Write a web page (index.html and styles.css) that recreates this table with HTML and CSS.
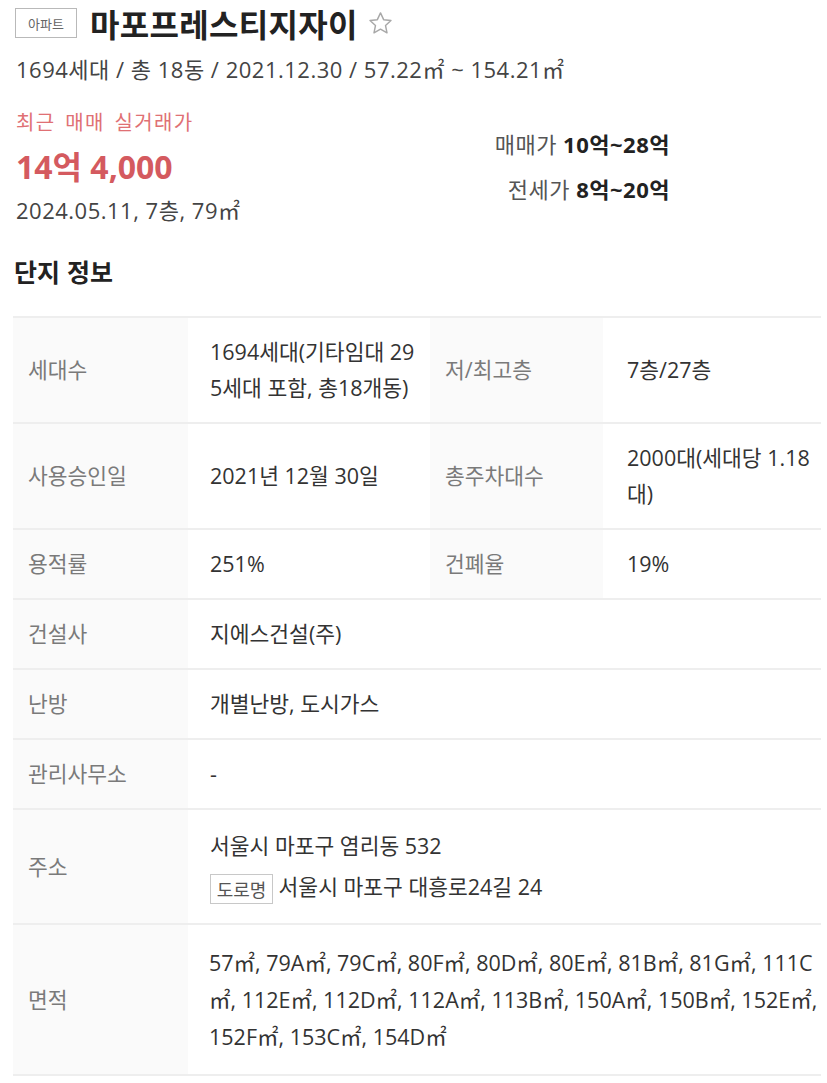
FILE: index.html
```html
<!DOCTYPE html>
<html lang="ko">
<head>
<meta charset="utf-8">
<title>마포프레스티지자이</title>
<link rel="stylesheet" href="styles.css">
</head>
<body>
<div class="page">
  <div class="title-row">
    <span class="type-badge">아파트</span>
    <h1 class="title">마포프레스티지자이</h1>
    <svg class="star" width="27" height="27" viewBox="0 0 24 24" aria-hidden="true">
      <path d="M12 2.6l2.8 6 6.5.75-4.82 4.45 1.3 6.45L12 17.05 6.22 20.25l1.3-6.45L2.7 9.35l6.5-.75z" fill="none" stroke="#a8a8a8" stroke-width="1.3" stroke-linejoin="round"/>
    </svg>
  </div>
  <p class="sub">1694세대 / 총 18동 / 2021.12.30 / 57.22㎡ ~ 154.21㎡</p>

  <div class="summary">
    <div class="recent">
      <div class="recent-label">최근 매매 실거래가</div>
      <div class="recent-price">14억 4,000</div>
      <div class="recent-date">2024.05.11, 7층, 79㎡</div>
    </div>
    <div class="ranges">
      <div class="range"><span class="range-label">매매가</span> <b>10억~28억</b></div>
      <div class="range"><span class="range-label">전세가</span> <b>8억~20억</b></div>
    </div>
  </div>

  <h2 class="section-title">단지 정보</h2>

  <table class="info">
    <colgroup>
      <col class="c-label"><col class="c-val1"><col class="c-label2"><col>
    </colgroup>
    <tr>
      <th>세대수</th><td>1694세대(기타임대 295세대 포함, 총18개동)</td>
      <th class="th2">저/최고층</th><td class="td2">7층/27층</td>
    </tr>
    <tr>
      <th>사용승인일</th><td>2021년 12월 30일</td>
      <th class="th2">총주차대수</th><td class="td2">2000대(세대당 1.18대)</td>
    </tr>
    <tr>
      <th>용적률</th><td>251%</td>
      <th class="th2">건폐율</th><td class="td2">19%</td>
    </tr>
    <tr>
      <th>건설사</th><td colspan="3">지에스건설(주)</td>
    </tr>
    <tr>
      <th>난방</th><td colspan="3">개별난방, 도시가스</td>
    </tr>
    <tr>
      <th>관리사무소</th><td colspan="3">-</td>
    </tr>
    <tr class="addr-row">
      <th>주소</th>
      <td colspan="3">
        <div class="addr-line">서울시 마포구 염리동 532</div>
        <div class="addr-line addr-road"><span class="road-badge">도로명</span> 서울시 마포구 대흥로24길 24</div>
      </td>
    </tr>
    <tr class="area-row">
      <th>면적</th>
      <td colspan="3">57㎡, 79A㎡, 79C㎡, 80F㎡, 80D㎡, 80E㎡, 81B㎡, 81G㎡, 111C㎡, 112E㎡, 112D㎡, 112A㎡, 113B㎡, 150A㎡, 150B㎡, 152E㎡, 152F㎡, 153C㎡, 154D㎡</td>
    </tr>
  </table>
</div>
</body>
</html>
```

FILE: styles.css
```css
* { box-sizing: border-box; }
html, body { margin: 0; padding: 0; background: #fff; }
body {
  font-family: "Open Sans", "Noto Sans CJK KR", sans-serif;
  color: #333;
}
.page {
  padding: 7px 6px 0 14px;
}
.title-row {
  display: flex;
  align-items: center;
  height: 32px;
}
.type-badge {
  display: inline-flex;
  align-items: center;
  justify-content: center;
  width: 62px;
  height: 30px;
  margin-left: 1px;
  border: 1px solid #b9b9b9;
  font-family: "Noto Sans CJK KR", sans-serif;
  font-size: 13px;
  color: #666;
  line-height: 1;
}
.title {
  margin: 0 0 0 13px;
  font-family: "Noto Sans CJK KR", sans-serif;
  font-size: 32px;
  font-weight: 700;
  color: #222;
  line-height: 32px;
  letter-spacing: 0.3px;
}
.star {
  margin-left: 9px;
}
.sub {
  margin: 17px 0 0 2px;
  font-size: 22px;
  line-height: 26px;
  color: #444;
  letter-spacing: 0.5px;
}
.summary {
  display: flex;
  justify-content: space-between;
  width: 656px;
  margin-top: 28px;
}
.recent { padding-left: 2px; }
.recent-label {
  font-size: 20px;
  line-height: 26px;
  letter-spacing: 1.4px;
  word-spacing: 3px;
  color: #e07074;
}
.recent-price {
  margin-top: 12px;
  font-size: 32px;
  line-height: 38px;
  font-weight: 700;
  color: #d45a5f;
}
.recent-date {
  margin-top: 11px;
  font-size: 22px;
  line-height: 26px;
  letter-spacing: 0.5px;
  color: #444;
}
.ranges {
  padding-top: 21px;
  text-align: right;
}
.range {
  font-size: 22px;
  line-height: 26px;
  letter-spacing: 0.5px;
  color: #222;
  margin-bottom: 19px;
}
.range-label { color: #555; }
.range b { font-weight: 700; }
.section-title {
  margin: 32px 0 0 0;
  font-family: "Noto Sans CJK KR", sans-serif;
  font-size: 25px;
  line-height: 32px;
  font-weight: 700;
  color: #222;
}
.info {
  margin-top: 29px;
  width: 808px;
  margin-left: -1px;
  border-collapse: collapse;
  table-layout: fixed;
  font-size: 21.5px;
}
.c-label { width: 175px; }
.c-val1 { width: 242px; }
.c-label2 { width: 173px; }
.info tr { border-top: 2px solid #eeeeee; border-bottom: 2px solid #eeeeee; }
.info th, .info td {
  padding: 16px 11px 16px 22px;
  line-height: 36px;
  text-align: left;
  vertical-align: middle;
  word-break: break-all;
}
.info th {
  background: #fafafa;
  font-weight: 400;
  color: #7a7a7a;
  padding-left: 15px;
}
.info th.th2 { padding-left: 15px; }
.info td { color: #333; }
.info td.td2 { padding-left: 24px; padding-right: 6px; }
.info .short-row th, .info .short-row td { padding-top: 16.5px; padding-bottom: 16.5px; }
.addr-row td { padding-top: 18px; padding-bottom: 18px; }
.addr-road { margin-top: 5px; }
.road-badge {
  display: inline-flex;
  align-items: center;
  justify-content: center;
  width: 63px;
  height: 30px;
  border: 1px solid #c8c8c8;
  font-family: "Noto Sans CJK KR", sans-serif;
  font-size: 18px;
  color: #555;
  vertical-align: middle;
  line-height: 1;
}
.area-row td { line-height: 37px; padding: 19px 0 19px 21px; }
```
